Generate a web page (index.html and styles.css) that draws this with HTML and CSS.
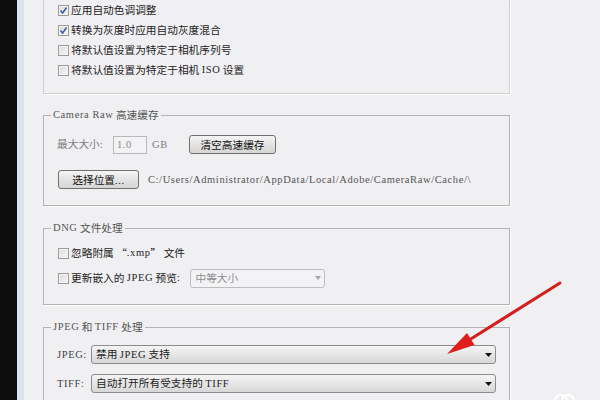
FILE: index.html
```html
<!DOCTYPE html>
<html lang="zh-CN">
<head>
    <meta charset="UTF-8">
    <title>Camera Raw 首选项</title>
    <link rel="stylesheet" href="styles.css">
</head>
<body>
<div class="screen">
    <div class="edge"></div>
    <div class="rail"></div>

    <main class="prefs">
        <!-- top group, its title is scrolled out of view -->
        <div class="group group-cut">
            <div class="check"><span class="box"><svg width="9" height="9" viewBox="0 0 9 9"><path d="M1.5 4.5 L3.6 7 L7.6 1.6" fill="none" stroke="#3f5c9f" stroke-width="1.6"/></svg></span>应用自动色调调整</div>
            <div class="check"><span class="box"><svg width="9" height="9" viewBox="0 0 9 9"><path d="M1.5 4.5 L3.6 7 L7.6 1.6" fill="none" stroke="#3f5c9f" stroke-width="1.6"/></svg></span>转换为灰度时应用自动灰度混合</div>
            <div class="check"><span class="box"></span>将默认值设置为特定于相机序列号</div>
            <div class="check"><span class="box"></span>将默认值设置为特定于相机 <span class="en">ISO</span> 设置</div>
        </div>

        <fieldset class="group cache">
            <legend><span class="en">Camera Raw</span> 高速缓存</legend>
            <div class="body">
                <div class="row">
                    <span class="muted size-label">最大大小<span class="en">:</span></span>
                    <input class="field en" type="text" value="1.0" disabled>
                    <span class="muted en unit">GB</span>
                    <button class="btn btn-clear">清空高速缓存</button>
                </div>
                <div class="row row-path">
                    <button class="btn btn-pick">选择位置<span class="en">...</span></button>
                    <span class="en path">C:/Users/Administrator/AppData/Local/Adobe/CameraRaw/Cache/\</span>
                </div>
            </div>
        </fieldset>

        <fieldset class="group dng">
            <legend><span class="en">DNG</span> 文件处理</legend>
            <div class="body">
                <div class="check"><span class="box"></span>忽略附属 “<span class="en">.xmp</span>” 文件</div>
                <div class="check check-drop"><span class="box"></span>更新嵌入的 <span class="en">JPEG</span> 预览<span class="en">:</span>
                    <div class="drop drop-off">中等大小<svg width="6" height="4" viewBox="0 0 6 4"><path d="M0 0 H6 L3 4 Z" fill="#a6a6a6"/></svg></div>
                </div>
            </div>
        </fieldset>

        <fieldset class="group jpeg">
            <legend><span class="en">JPEG</span> 和 <span class="en">TIFF</span> 处理</legend>
            <div class="body">
                <div class="row">
                    <span class="en pick-label">JPEG:</span>
                    <div class="drop">
                        <span>禁用 <span class="en">JPEG</span> 支持</span>
                        <svg width="7" height="4" viewBox="0 0 7 4"><path d="M0 0 H7 L3.5 4 Z" fill="#111"/></svg>
                    </div>
                </div>
                <div class="row row-tiff">
                    <span class="en pick-label">TIFF:</span>
                    <div class="drop">
                        <span>自动打开所有受支持的 <span class="en">TIFF</span></span>
                        <svg width="7" height="4" viewBox="0 0 7 4"><path d="M0 0 H7 L3.5 4 Z" fill="#111"/></svg>
                    </div>
                </div>
            </div>
        </fieldset>
    </main>

    <!-- red annotation arrow drawn over the dialog -->
    <svg class="mark" width="600" height="400" viewBox="0 0 600 400">
        <line x1="560" y1="283" x2="466" y2="342" stroke="#d21f1f" stroke-width="3" stroke-linecap="round"/>
        <path d="M447 354 L474.5 345 L467 333 Z" fill="#e01c1c"/>
        <circle cx="561" cy="401" r="6" fill="none" stroke="#fff" stroke-width="2"/>
        <circle cx="568" cy="401" r="6" fill="none" stroke="#fff" stroke-width="2"/>
    </svg>
</div>
</body>
</html>
```

FILE: styles.css
```css
* { box-sizing: border-box; }
html, body { margin: 0; height: 100%; }
body { background: #f0eff2; font-family: "Noto Sans CJK SC", "Noto Sans", sans-serif; font-size: 10.7px; line-height: 14px; color: #1c1c1c; overflow: hidden; }

.screen { position: relative; display: flex; height: 400px; }
.edge { width: 17px; background: #0d0d0d; }
.rail { width: 7px; background: #d9e3ef; }
.prefs { width: 486px; padding-left: 19px; }

.en { font-family: "Liberation Serif", "DejaVu Serif", serif; font-size: 10.5px; letter-spacing: 0.6px; }
.muted { color: #7d7d7d; }

.group { margin: 0; padding: 0; min-width: 0; border: 1px solid #b3b3b3; box-shadow: 1px 1px 0 #fff; }
.group legend { display: flex; align-items: center; height: 12px; margin-left: 7px; padding: 0 2px; line-height: 12px; color: #555; white-space: pre; }
.group .body { padding-left: 13px; }

.group-cut { border-top: 0; padding: 0 0 13px 13px; border-color: #cfcfcf; }

.cache { margin-top: 15px; }
.cache .body { padding-top: 14px; padding-bottom: 16px; }
.dng { margin-top: 16px; }
.dng .body { padding-top: 9px; padding-bottom: 16px; }
.jpeg { margin-top: 16px; }
.jpeg .body { padding-top: 12px; padding-bottom: 40px; }

.check { display: flex; align-items: center; height: 20px; padding-left: 1px; white-space: pre; }
.box { display: flex; align-items: center; justify-content: center; width: 11px; height: 11px; margin-right: 2px; border: 1px solid #9a9a9a; background: linear-gradient(135deg, #dadada, #f7f7f7); box-shadow: inset 0 0 0 1px #f4f4f4; }
.check-drop { margin-top: 5px; }

.row { display: flex; align-items: center; height: 19px; white-space: pre; }
.row-path { margin-top: 16px; }
.row-tiff { margin-top: 10px; }

.size-label { width: 56px; }
.field { width: 34px; height: 18px; padding: 0 3px; border: 1px solid #b9b9b9; background: #f3f2f4; color: #8a8a8a; }
.unit { margin-left: 5px; width: 37px; }
.btn { height: 19px; padding: 0; border: 1px solid #707070; border-radius: 3px; background: linear-gradient(#f5f5f5, #e3e3e3 50%, #d6d6d6); font-family: inherit; font-size: 10.7px; color: #111; }
.btn-clear { width: 87px; }
.btn-pick { width: 81px; margin-left: 1px; }
.path { margin-left: 9px; color: #555; }

.drop { display: flex; align-items: center; justify-content: space-between; height: 19px; border: 1px solid #8c8c8c; border-radius: 3px; padding: 0 3px 0 4px; background: linear-gradient(#f4f4f4, #e6e6e6 50%, #d7d7d7); }
.drop-off { width: 135px; margin-left: 10px; border-color: #bdbdbd; background: #f3f3f5; color: #8f8f8f; }
.pick-label { width: 34px; color: #444; }
.jpeg .drop { width: 405px; }

.mark { position: absolute; left: 0; top: 0; pointer-events: none; }
```
